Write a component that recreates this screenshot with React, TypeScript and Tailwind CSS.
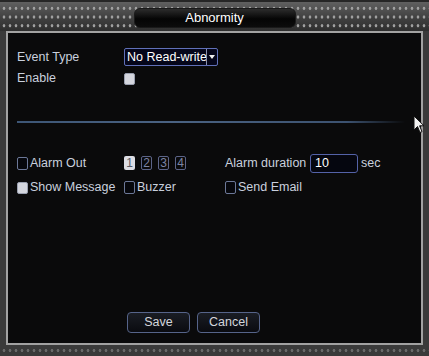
import React from 'react'

const Box = ({ on }: { on?: boolean }) => (
  <span
    className={
      on
        ? 'inline-block w-[11px] h-[12px] rounded-[2px] bg-[#d4d6de] border border-[#9aa0b0]'
        : 'inline-block w-[11px] h-[13px] rounded-[2px] bg-[#06070c] border border-[#6c7898]'
    }
  />
)

const Check = ({ label, on }: { label: string; on?: boolean }) => (
  <label className="flex items-center gap-[2px]">
    <Box on={on} />
    <span>{label}</span>
  </label>
)

function Cursor() {
  return (
    <svg className="absolute left-[413px] top-[115px]" width="12" height="19" viewBox="0 0 12 19">
      <path d="M1 1 L1 15 L4.5 11.5 L7 17.5 L9 16.6 L6.6 10.8 L11 10.8 Z" fill="#f2f2f2" stroke="#111" strokeWidth="1" />
    </svg>
  )
}

export default function App() {
  return (
    <div className="relative w-[429px] h-[356px] bg-[#3a3a3a] flex flex-col font-['Liberation_Sans',Arial,sans-serif] text-[12.5px] text-[#c9d0de] overflow-hidden">
      <div className="h-[31px] pt-[3px] border-t-2 border-[#262626] flex items-center justify-center [background-image:radial-gradient(circle_at_center,#a0a0a0_1.1px,transparent_1.7px),linear-gradient(#606060,#404040_55%,#2e2e2e)] [background-size:6px_8.7px,100%_100%] [background-position:1px_2px,0_0]">
        <div className="w-[162px] h-[20px] rounded-[6px] bg-[linear-gradient(#2c2c2c,#050505_55%,#0c0c0c)] border border-[#1a1a1a] flex items-center justify-center text-[13px] text-white">
          Abnormity
        </div>
      </div>

      <div className="flex-1 mx-[6px] border-2 border-[#a2a2a2] bg-[#0a0a0b] flex flex-col pl-[9px] pt-[15px] pb-[10px]">
        <div className="flex items-center h-[18px]">
          <span className="w-[107px]">Event Type</span>
          <div className="w-[94px] h-[18px] border border-[#6070b8] rounded-[2px] bg-[#05061a] flex items-center overflow-hidden">
            <span className="flex-1 pl-[2px] text-white whitespace-nowrap overflow-hidden">No Read-write</span>
            <span className="w-[11px] h-full border-l border-[#8890b0] flex items-center justify-center">
              <svg width="6" height="4" viewBox="0 0 6 4"><path d="M0 0 H6 L3 4 Z" fill="#f0f0f0" /></svg>
            </span>
          </div>
        </div>
        <div className="flex items-center h-[13px] mt-[6px]">
          <span className="w-[107px]">Enable</span>
          <Box on />
        </div>

        <div className="mt-[36px] w-[388px] h-[2px] bg-[linear-gradient(90deg,#3d5676,#4a6282_40%,#3c5270_85%,transparent)]" />

        <div className="flex items-center h-[20px] mt-[30px]">
          <div className="w-[107px]"><Check label="Alarm Out" /></div>
          <div className="w-[101px] flex items-center gap-[6px]">
            {['1', '2', '3', '4'].map((n, i) => (
              <span
                key={n}
                className={
                  i === 0
                    ? 'w-[11px] h-[14px] rounded-[2px] bg-[#dcdde4] text-[#555a66] text-[12px] flex items-center justify-center'
                    : 'w-[11px] h-[14px] rounded-[2px] border border-[#5c6488] text-[#7c84a4] text-[12px] flex items-center justify-center'
                }
              >
                {n}
              </span>
            ))}
          </div>
          <span className="w-[85px]">Alarm duration</span>
          <div className="w-[48px] h-[19px] border border-[#5462a8] rounded-[3px] bg-[#05060f] text-white flex items-center pl-[4px]">10</div>
          <span className="ml-[3px]">sec</span>
        </div>

        <div className="flex items-center h-[17px] mt-[6px]">
          <div className="w-[107px]"><Check label="Show Message" on /></div>
          <div className="w-[101px]"><Check label="Buzzer" /></div>
          <Check label="Send Email" />
        </div>

        <div className="mt-auto flex gap-[7px] pl-[110px]">
          {['Save', 'Cancel'].map(t => (
            <button
              key={t}
              className="w-[63px] h-[21px] rounded-[4px] border border-[#56648a] bg-[linear-gradient(#1a1d24,#0a0b10)] text-[#d4d6dc] flex items-center justify-center"
            >
              {t}
            </button>
          ))}
        </div>
      </div>

      <div className="h-[11px] [background-image:radial-gradient(circle_at_center,#6a6a6a_1.1px,transparent_1.7px)] [background-size:6px_11px] [background-position:1px_0]" />
      <Cursor />
    </div>
  )
}
